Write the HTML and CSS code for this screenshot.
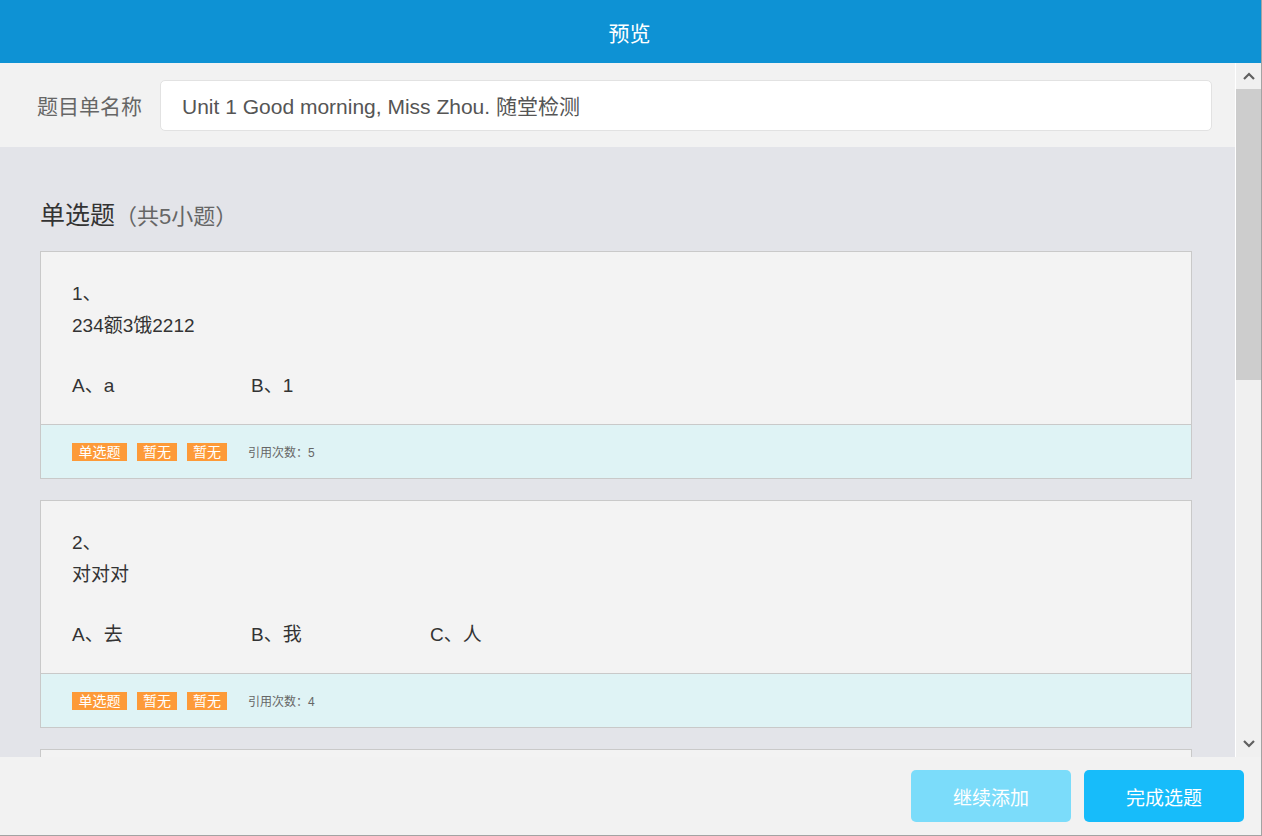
FILE: index.html
```html
<!DOCTYPE html>
<html lang="zh">
<head>
<meta charset="utf-8">
<title>预览</title>
<link rel="stylesheet" href="styles.css">
</head>
<body>
<div class="app">
  <header class="topbar">预览</header>
  <div class="main">
    <div class="content">
      <div class="name-row">
        <label class="name-label">题目单名称</label>
        <div class="name-input">Unit 1 Good morning, Miss Zhou. 随堂检测</div>
      </div>
      <section class="section">
        <h2 class="section-title">单选题<span class="section-count">（共5小题）</span></h2>
        <div class="card">
          <div class="card-body">
            <div class="q-line">1、</div>
            <div class="q-line">234额3饿2212</div>
            <div class="options">
              <span class="option">A、a</span>
              <span class="option">B、1</span>
            </div>
          </div>
          <div class="card-foot">
            <span class="tag">单选题</span>
            <span class="tag">暂无</span>
            <span class="tag">暂无</span>
            <span class="cite">引用次数：5</span>
          </div>
        </div>
        <div class="card">
          <div class="card-body">
            <div class="q-line">2、</div>
            <div class="q-line">对对对</div>
            <div class="options">
              <span class="option">A、去</span>
              <span class="option">B、我</span>
              <span class="option">C、人</span>
            </div>
          </div>
          <div class="card-foot">
            <span class="tag">单选题</span>
            <span class="tag">暂无</span>
            <span class="tag">暂无</span>
            <span class="cite">引用次数：4</span>
          </div>
        </div>
        <div class="card card-empty"></div>
      </section>
    </div>
    <div class="scrollbar">
      <div class="sb-btn">
        <svg width="12" height="8" viewBox="0 0 12 8"><path d="M1 7 L6 2 L11 7" fill="none" stroke="#606060" stroke-width="2.2"/></svg>
      </div>
      <div class="sb-track">
        <div class="sb-thumb"></div>
      </div>
      <div class="sb-btn">
        <svg width="12" height="8" viewBox="0 0 12 8"><path d="M1 1 L6 6 L11 1" fill="none" stroke="#606060" stroke-width="2.2"/></svg>
      </div>
    </div>
  </div>
  <footer class="bottombar">
    <button class="btn btn-light">继续添加</button>
    <button class="btn btn-primary">完成选题</button>
  </footer>
</div>
</body>
</html>
```

FILE: styles.css
```css
* { box-sizing: border-box; }
html, body { margin: 0; padding: 0; }
body {
  font-family: "Liberation Sans", Arial, "Noto Sans CJK SC", sans-serif;
  color: #333;
  background: #f2f2f2;
}
.app {
  width: 1262px;
  height: 836px;
  display: flex;
  flex-direction: column;
  border-right: 1px solid #a3a3a3;
  border-bottom: 1px solid #a3a3a3;
  overflow: hidden;
}
.topbar {
  height: 63px;
  flex: none;
  background: #0e92d4;
  color: #fff;
  font-size: 21px;
  display: flex;
  align-items: center;
  justify-content: center;
  padding-right: 2px;
}
.main {
  flex: 1;
  display: flex;
  min-height: 0;
}
.content {
  flex: 1;
  overflow: hidden;
  background: #e3e4e9;
}
.name-row {
  height: 84px;
  background: #f2f2f2;
  display: flex;
  align-items: center;
  padding: 0 23px 0 37px;
}
.name-label {
  font-size: 21px;
  color: #666;
  width: 123px;
  flex: none;
}
.name-input {
  flex: 1;
  height: 51px;
  background: #fff;
  border: 1px solid #e2e2e2;
  border-radius: 5px;
  display: flex;
  align-items: center;
  padding-left: 21px;
  font-size: 21px;
  color: #555;
}
.section {
  padding: 50px 43px 0 40px;
}
.section-title {
  margin: 0 0 18px 0;
  height: 36px;
  font-weight: normal;
  font-size: 25px;
  line-height: 36px;
  color: #333;
}
.section-count {
  font-size: 22px;
  line-height: 36px;
  color: #666;
}
.card {
  border: 1px solid #c9c9c9;
  background: #f3f3f3;
  margin-bottom: 21px;
}
.card-empty {
  height: 40px;
}
.card-body {
  padding: 26px 31px 22px 31px;
  font-size: 19px;
}
.q-line {
  line-height: 32px;
}
.options {
  display: flex;
  margin-top: 28px;
  line-height: 32px;
}
.option {
  width: 179px;
}
.card-foot {
  height: 54px;
  background: #dff3f5;
  border-top: 1px solid #c9c9c9;
  display: flex;
  align-items: center;
  padding-left: 31px;
}
.tag {
  background: #fd9a38;
  color: #fff;
  font-size: 14px;
  height: 18px;
  line-height: 18px;
  padding: 0 6px;
  margin-right: 10px;
}
.tag:first-child {
  padding: 0 6.5px;
}
.cite {
  margin-left: 11px;
  font-size: 12px;
  color: #666;
}
.scrollbar {
  width: 26px;
  flex: none;
  display: flex;
  flex-direction: column;
  background: #f0f0f0;
  border-left: 1px solid #ffffff;
}
.sb-btn {
  height: 26px;
  display: flex;
  align-items: center;
  justify-content: center;
  flex: none;
}
.sb-track {
  flex: 1;
}
.sb-thumb {
  height: 291px;
  background: #cdcdcd;
}
.bottombar {
  height: 78px;
  flex: none;
  background: #f2f2f2;
  display: flex;
  justify-content: flex-end;
  align-items: flex-start;
  padding: 13px 17px 0 0;
  gap: 13px;
}
.btn {
  width: 160px;
  height: 52px;
  border: none;
  border-radius: 5px;
  color: #fff;
  font-size: 19px;
  font-family: "Liberation Sans", Arial, "Noto Sans CJK SC", sans-serif;
}
.btn-light { background: #7bdcfa; }
.btn-primary { background: #17bcfa; }
```
